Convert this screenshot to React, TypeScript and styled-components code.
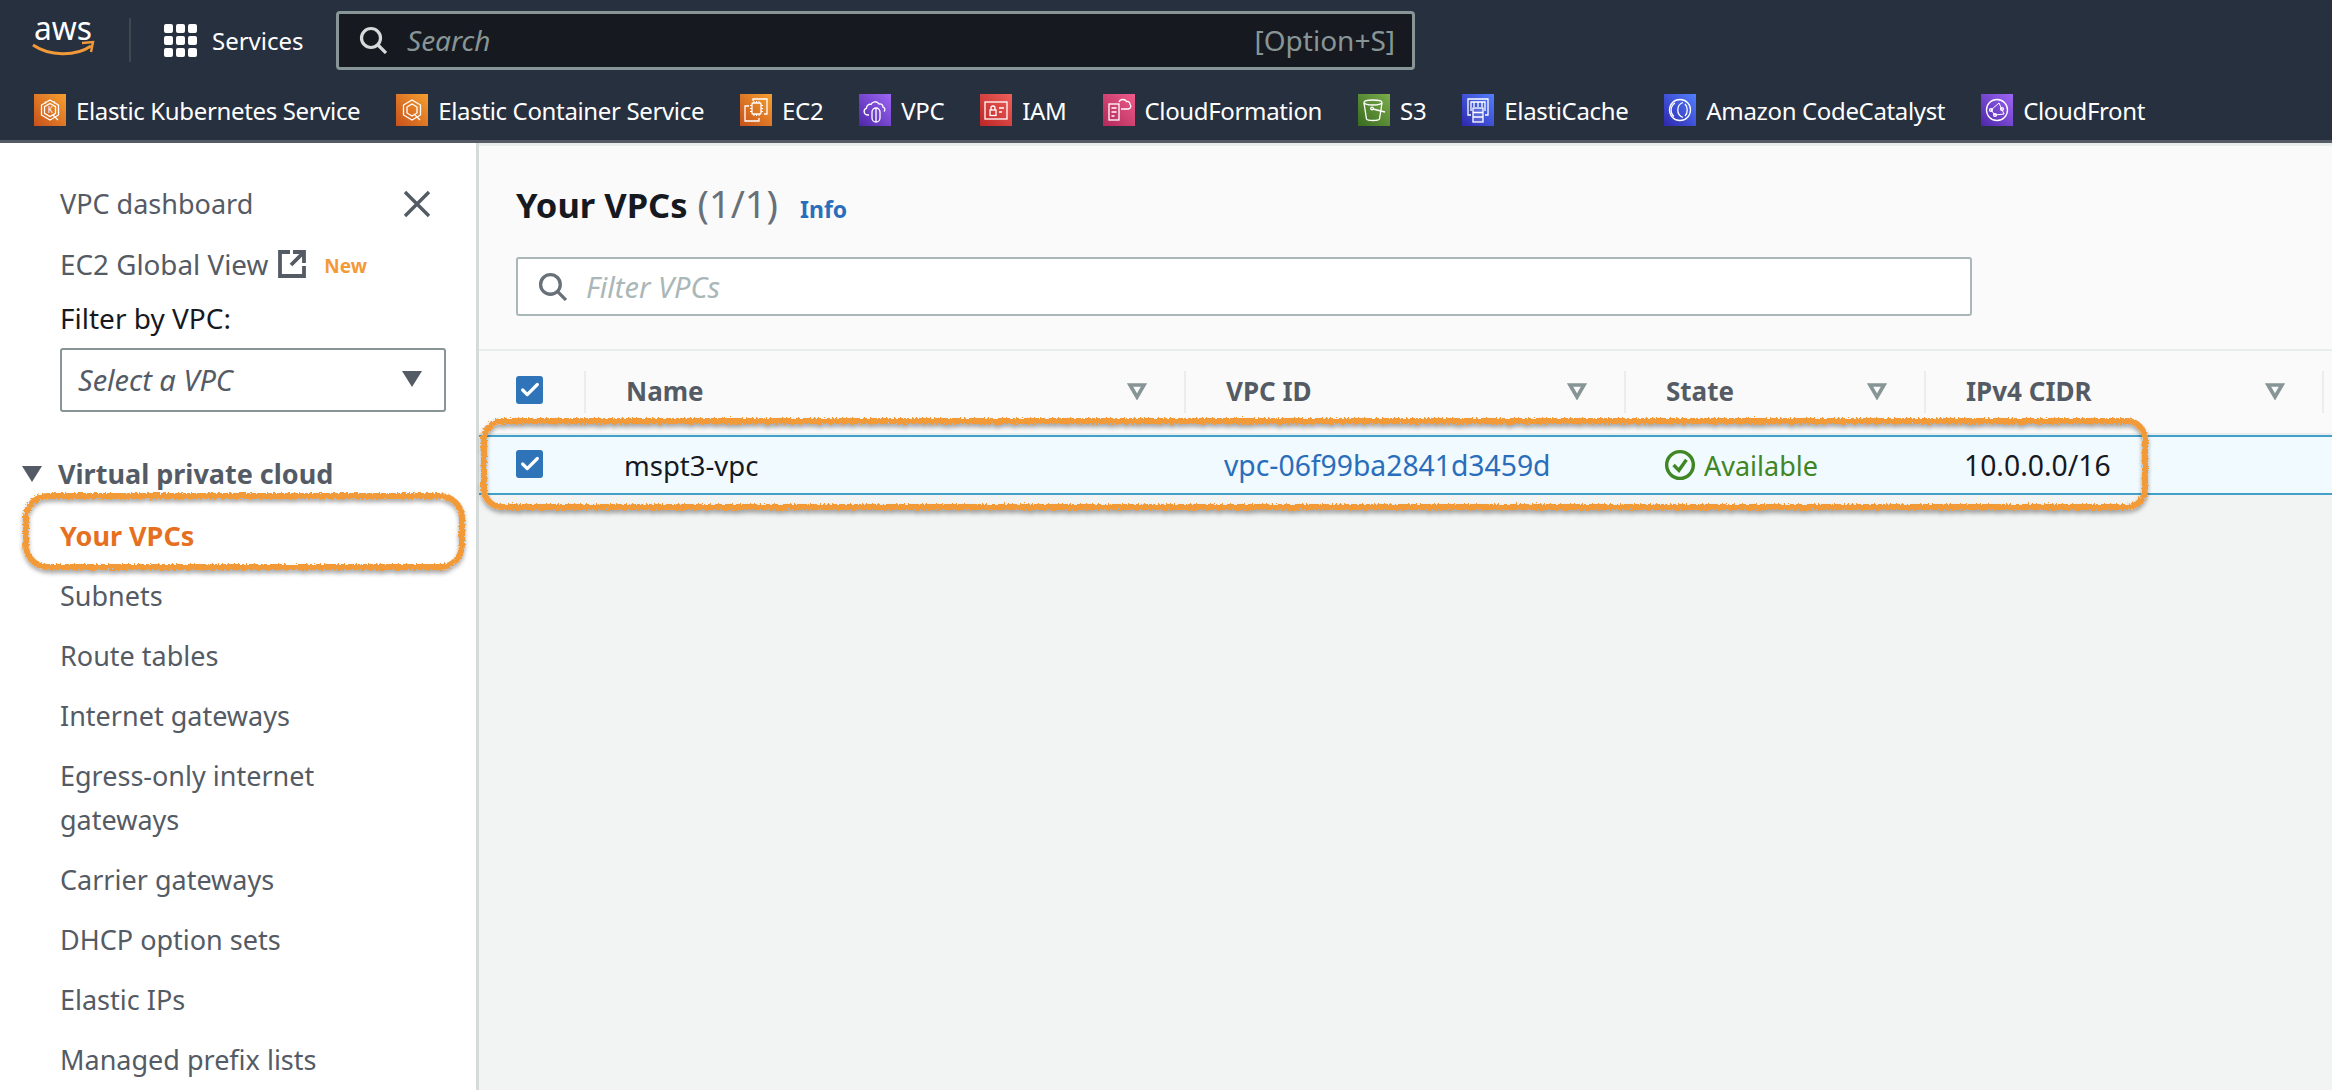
import React from 'react'
import styled, { createGlobalStyle } from 'styled-components'
import { Check } from 'lucide-react'

const GlobalStyle = createGlobalStyle`
  html, body {
    margin: 0;
    padding: 0;
    height: 1090px;
    overflow: hidden;
    background: #f2f3f3;
    font-family: "Noto Sans", "Open Sans", sans-serif;
  }
`

const Page = styled.div`
  position: relative;
  width: 2332px;
  height: 1090px;
  overflow: hidden;
`

const TopBar = styled.header`
  height: 140px;
  background: #27303f;
  border-bottom: 3px solid #545b64;
`
const BarRow = styled.div`
  display: flex;
  align-items: center;
  height: 80px;
  padding-left: 32px;
`
const BarDivider = styled.span`
  width: 2px;
  height: 44px;
  background: #414750;
  margin: 0 33px 0 33px;
`
const DotGrid = styled.div`
  display: grid;
  grid-template-columns: repeat(3, 9px);
  gap: 3px;
  margin-right: 15px;
`
const Dot = styled.span`
  width: 9px;
  height: 9px;
  border-radius: 2px;
  background: #fff;
`
const ServicesLabel = styled.span`
  color: #fff;
  font-size: 24px;
  width: 124px;
`
const SearchBox = styled.div`
  box-sizing: border-box;
  width: 1079px;
  height: 59px;
  display: flex;
  align-items: center;
  padding: 0 17px 0 20px;
  background: #16191f;
  border: 3px solid #879596;
  border-radius: 4px;
  color: #879596;
  font-size: 28px;
`
const SearchHint = styled.span`
  flex: 1;
  font-style: italic;
  margin-left: 20px;
`

const FavRow = styled.nav`
  display: flex;
  align-items: center;
  gap: 36px;
  height: 60px;
  padding: 0 0 0 34px;
`
const Fav = styled.a`
  display: flex;
  align-items: center;
  gap: 10px;
  color: #fff;
  font-size: 24px;
  letter-spacing: -0.35px;
  white-space: nowrap;
`
const Tile = styled.span<{ $from: string; $to: string }>`
  width: 32px;
  height: 32px;
  flex: none;
  background: linear-gradient(45deg, ${(p) => p.$from}, ${(p) => p.$to});
  svg {
    display: block;
    fill: none;
    stroke: #fff;
    stroke-width: 1.3;
  }
`

const Body = styled.div`
  display: flex;
  height: 947px;
`
const Sidebar = styled.aside`
  box-sizing: border-box;
  width: 479px;
  flex: none;
  padding: 31px 30px 0 60px;
  background: #fff;
  border-right: 3px solid #d5dbdb;
  overflow: hidden;
`
const NavItem = styled.div<{ $active?: boolean }>`
  padding: 8px 40px 8px 0;
  font-size: 27px;
  line-height: 44px;
  color: ${(p) => (p.$active ? '#e5701f' : '#545b64')};
  font-weight: ${(p) => (p.$active ? 700 : 400)};
`
const NavTop = styled(NavItem)`
  display: flex;
  align-items: center;
  justify-content: space-between;
  padding-right: 15px;
`
const GlobalView = styled(NavItem)`
  display: flex;
  align-items: center;
  font-size: 27.800px;
`
const ExternalIcon = styled.svg`
  margin-left: 10px;
  flex: none;
`
const NewTag = styled.span`
  color: #f39a38;
  font-size: 19px;
  line-height: 1;
  font-weight: 700;
  margin: 4px 0 0 18px;
`
const FilterLabel = styled.div`
  margin-top: 2px;
  font-size: 28px;
  line-height: 44px;
  color: #16191f;
`
const SelectBox = styled.div`
  box-sizing: border-box;
  height: 64px;
  margin-top: 8px;
  display: flex;
  align-items: center;
  justify-content: space-between;
  padding: 0 22px 2px 16px;
  border: 2px solid #879596;
  border-radius: 3px;
  font-size: 29px;
  font-style: italic;
  color: #545b64;
`
const Caret = styled.span`
  width: 0;
  height: 0;
  border-left: 10px solid transparent;
  border-right: 10px solid transparent;
  border-top: 16px solid #545b64;
`
const SectionHead = styled.div`
  display: flex;
  align-items: center;
  gap: 16px;
  margin: 40px 0 10px -38px;
  font-size: 27px;
  line-height: 44px;
  font-weight: 700;
  color: #545b64;
`

const Main = styled.main`
  flex: 1;
  min-width: 0;
  border-top: 3px solid #eaeded;
`
const TopPanel = styled.section`
  box-sizing: border-box;
  height: 205px;
  padding: 32px 37px 0;
  background: #fafafa;
  border-bottom: 2px solid #eaeded;
`
const TitleLine = styled.div`
  display: flex;
  align-items: baseline;
  height: 50px;
  line-height: 50px;
`
const Title = styled.h1`
  margin: 0;
  font-size: 34.500px;
  font-weight: 700;
  color: #16191f;
`
const Count = styled.span`
  margin-left: 10px;
  font-size: 38px;
  color: #687078;
`
const InfoLink = styled.a`
  margin-left: 22px;
  font-size: 23px;
  font-weight: 700;
  color: #2a6ebb;
`
const FilterBox = styled.div`
  box-sizing: border-box;
  width: 1456px;
  height: 59px;
  margin-top: 29px;
  display: flex;
  align-items: center;
  gap: 19px;
  padding: 0 20px;
  background: #fff;
  border: 2px solid #aab7b8;
  border-radius: 3px;
  font-size: 29px;
  font-style: italic;
  color: #aab7b8;
`

const columns = '105px 600px 440px 300px 400px 1fr'

const HeadRow = styled.div`
  display: grid;
  grid-template-columns: ${columns};
  align-items: center;
  height: 84px;
  background: #fafafa;
  border-bottom: 2px solid #eaeded;
  box-sizing: border-box;
`
const HeadCell = styled.div`
  box-sizing: border-box;
  height: 42px;
  display: flex;
  align-items: center;
  justify-content: space-between;
  padding: 0 37px 2px 40px;
  border-left: 2px solid #eaeded;
  font-size: 26px;
  font-weight: 700;
  color: #545b64;
  &:nth-child(5) {
    border-right: 2px solid #eaeded;
  }
`
const BodyRow = styled.div`
  display: grid;
  grid-template-columns: ${columns};
  align-items: center;
  box-sizing: border-box;
  height: 60px;
  background: #f1faff;
  border-top: 2px solid #44a0c9;
  border-bottom: 2px solid #44a0c9;
`
const BodyCell = styled.div<{ $color?: string; $size: number }>`
  display: flex;
  align-items: center;
  gap: 8px;
  padding-left: 40px;
  font-size: ${(p) => p.$size}px;
  color: ${(p) => p.$color || '#16191f'};
`
const CheckCell = styled.div<{ $lift: number }>`
  padding: 0 0 ${(p) => p.$lift}px 37px;
`
const CheckBox = styled.span`
  display: flex;
  align-items: center;
  justify-content: center;
  width: 27px;
  height: 28px;
  border-radius: 3px;
  background: #2f74b9;
  color: #fff;
`
const FilterArrow = styled.svg`
  display: block;
  width: 20px;
  height: 18px;
`

const Annotations = styled.svg`
  position: absolute;
  left: 0;
  top: 0;
  pointer-events: none;
`

const SearchIcon = ({ color, size }: { color: string; size: number }) => (
  <svg width={size} height={size} viewBox="0 0 28 28" fill="none" stroke={color} strokeWidth="3.2">
    <circle cx="12" cy="12" r="9.5" />
    <path d="M19 19l8 8" />
  </svg>
)

const AwsLogo = () => (
  <svg width="64" height="80" viewBox="0 -18 64 80">
    <text x="2" y="22" fontFamily="Noto Sans" fontSize="33" fill="#fff" textLength="58" lengthAdjust="spacingAndGlyphs">
      aws
    </text>
    <path d="M1 27c16 11 42 12 58 1" fill="none" stroke="#f39a38" strokeWidth="3" />
    <path d="M50 25l11-1-2 10" fill="none" stroke="#f39a38" strokeWidth="2.4" />
  </svg>
)

const EksIcon = () => (
  <svg viewBox="0 0 32 32" width="32" height="32">
    <path d="M16 6l8.5 5v10L16 26l-8.5-5V11z" />
    <path d="M16 9.5l5.5 3.2v6.6L16 22.5l-5.5-3.2v-6.6z" />
    <path d="M12 7.5l-1 2M20 7.500l1 2M19 21l5 5" />
    <text x="16" y="19" fontSize="8" textAnchor="middle" fill="#fff" stroke="none" fontFamily="Noto Sans">K</text>
  </svg>
)
const EcsIcon = () => (
  <svg viewBox="0 0 32 32" width="32" height="32">
    <path d="M16 6l8.500 5v10L16 26l-8.500-5V11z" />
    <path d="M16 10l5 3v6l-5 3-5-3v-6z" />
    <path d="M19 21l5 5" />
  </svg>
)
const Ec2Icon = () => (
  <svg viewBox="0 0 32 32" width="32" height="32">
    <rect x="12" y="9" width="9" height="11" rx="1" />
    <path d="M10 11.500h2M10 14.500h2M10 17.500h2M21 11.500h2M21 14.500h2M21 17.500h2M14 7v2M16.500 7v2M19 7v2M14 20v2M16.500 20v2M19 20v2" strokeWidth="1" />
    <path d="M13 7V5h14v15h-3M9 12H5v15h14v-3" />
  </svg>
)
const VpcIcon = () => (
  <svg viewBox="0 0 32 32" width="32" height="32">
    <path d="M10 21H8.500a3.500 3.500 0 0 1-1-6.800c0-3 2.500-4.500 4.500-3.700C13 7.500 18 6.500 20 10c2.500-.5 4 1 4 3.200 2 .5 2.500 2.800 1 4.300" />
    <rect x="13" y="14" width="8" height="14" rx="4" />
    <path d="M17 14v14" />
  </svg>
)
const IamIcon = () => (
  <svg viewBox="0 0 32 32" width="32" height="32">
    <rect x="5" y="8" width="22" height="17" />
    <rect x="10" y="16" width="6" height="5.500" />
    <path d="M11 16v-2a2 2 0 0 1 4 0v2M19 14h5M19 18h3" />
  </svg>
)
const CloudFormationIcon = () => (
  <svg viewBox="0 0 32 32" width="32" height="32">
    <rect x="6" y="10" width="10" height="16" />
    <path d="M8.500 14h5M8.500 18h5M8.500 22h3" />
    <path d="M16 8c1-3 6-3.500 7.500-.5 2-.5 3.500 1 3.500 3 1.500 1 1 4-1.500 4.500H18" />
  </svg>
)
const S3Icon = () => (
  <svg viewBox="0 0 32 32" width="32" height="32">
    <ellipse cx="15" cy="8.500" rx="9" ry="2.500" />
    <path d="M6 9l2.500 16c1 2 12 2 13 0L24 9" />
    <circle cx="14" cy="14.500" r="1.300" />
    <path d="M15 15l12 3" />
  </svg>
)
const ElastiCacheIcon = () => (
  <svg viewBox="0 0 32 32" width="32" height="32">
    <path d="M9 21H6V5h20v16h-3M9 17V8h14v9M12 8v5M16 8v5M20 8v5" />
    <rect x="11" y="14" width="10" height="14" fill="#fff" fillOpacity=".15" />
    <path d="M11 18.500h10M11 23h10" />
  </svg>
)
const CatalystIcon = () => (
  <svg viewBox="0 0 32 32" width="32" height="32">
    <circle cx="16" cy="16" r="10.500" />
    <path d="M19 8.500a8 8 0 0 0 0 15M11 9a8.500 8.500 0 0 0-1 13.500M21 10c3 3 3 9 0 12" />
  </svg>
)
const CloudFrontIcon = () => (
  <svg viewBox="0 0 32 32" width="32" height="32">
    <circle cx="16" cy="16" r="10.500" />
    <path d="M10 16l8-7 5 11M10 16l4 5 9-1" strokeWidth="1" />
    <circle cx="10" cy="16" r="1.400" />
    <circle cx="14" cy="21" r="1.400" />
    <circle cx="21" cy="15" r="1.400" />
  </svg>
)

const ORANGE = ['#c8511b', '#f59f30']
const PURPLE = ['#4d27a8', '#9e66f5']
const BLUE = ['#2e27ad', '#527fff']

const favourites = [
  { label: 'Elastic Kubernetes Service', colors: ORANGE, Icon: EksIcon },
  { label: 'Elastic Container Service', colors: ORANGE, Icon: EcsIcon },
  { label: 'EC2', colors: ORANGE, Icon: Ec2Icon },
  { label: 'VPC', colors: PURPLE, Icon: VpcIcon },
  { label: 'IAM', colors: ['#bd2626', '#ee5f5a'], Icon: IamIcon },
  { label: 'CloudFormation', colors: ['#b0295a', '#ef5c8b'], Icon: CloudFormationIcon },
  { label: 'S3', colors: ['#3a6b20', '#7aad4b'], Icon: S3Icon },
  { label: 'ElastiCache', colors: BLUE, Icon: ElastiCacheIcon },
  { label: 'Amazon CodeCatalyst', colors: BLUE, Icon: CatalystIcon },
  { label: 'CloudFront', colors: PURPLE, Icon: CloudFrontIcon },
]

const navLinks = [
  'Subnets',
  'Route tables',
  'Internet gateways',
  'Egress-only internet gateways',
  'Carrier gateways',
  'DHCP option sets',
  'Elastic IPs',
  'Managed prefix lists',
]

const headers = ['Name', 'VPC ID', 'State', 'IPv4 CIDR']

const TickBox = () => (
  <CheckBox>
    <Check size={22} strokeWidth={3.5} />
  </CheckBox>
)

const App = () => (
  <Page>
    <GlobalStyle />
    <TopBar>
      <BarRow>
        <AwsLogo />
        <BarDivider />
        <DotGrid>
          {Array.from({ length: 9 }, (_, i) => (
            <Dot key={i} />
          ))}
        </DotGrid>
        <ServicesLabel>Services</ServicesLabel>
        <SearchBox>
          <SearchIcon color="#d5dbdb" size={28} />
          <SearchHint>Search</SearchHint>
          <span>[Option+S]</span>
        </SearchBox>
      </BarRow>
      <FavRow>
        {favourites.map(({ label, colors, Icon }) => (
          <Fav key={label}>
            <Tile $from={colors[0]} $to={colors[1]}>
              <Icon />
            </Tile>
            {label}
          </Fav>
        ))}
      </FavRow>
    </TopBar>
    <Body>
      <Sidebar>
        <NavTop>
          VPC dashboard
          <svg width="28" height="28" viewBox="0 0 28 28" stroke="#545b64" strokeWidth="3.400">
            <path d="M2 2l24 24M26 2L2 26" />
          </svg>
        </NavTop>
        <GlobalView>
          EC2 Global View
          <ExternalIcon width="28" height="28" viewBox="0 0 28 28" fill="none" stroke="#545b64" strokeWidth="3.800">
            <path d="M12 2H2v24h24V16M15 2h11v11M26 2L13 15" />
          </ExternalIcon>
          <NewTag>New</NewTag>
        </GlobalView>
        <FilterLabel>Filter by VPC:</FilterLabel>
        <SelectBox>
          Select a VPC
          <Caret />
        </SelectBox>
        <SectionHead>
          <Caret />
          Virtual private cloud
        </SectionHead>
        <NavItem $active>Your VPCs</NavItem>
        {navLinks.map((link) => (
          <NavItem key={link}>{link}</NavItem>
        ))}
      </Sidebar>
      <Main>
        <TopPanel>
          <TitleLine>
            <Title>Your VPCs</Title>
            <Count>(1/1)</Count>
            <InfoLink>Info</InfoLink>
          </TitleLine>
          <FilterBox>
            <SearchIcon color="#687078" size={29} />
            Filter VPCs
          </FilterBox>
        </TopPanel>
        <HeadRow>
          <CheckCell $lift={5}>
            <TickBox />
          </CheckCell>
          {headers.map((h) => (
            <HeadCell key={h}>
              {h}
              <FilterArrow viewBox="0 0 20 18" fill="none" stroke="#879596" strokeWidth="3.600">
                <path d="M3 3h14L10 15z" />
              </FilterArrow>
            </HeadCell>
          ))}
          <div />
        </HeadRow>
        <BodyRow>
          <CheckCell $lift={2}>
            <TickBox />
          </CheckCell>
          <BodyCell $size={27.5}>mspt3-vpc</BodyCell>
          <BodyCell $size={28.3} $color="#2a6ebb">
            vpc-06f99ba2841d3459d
          </BodyCell>
          <BodyCell $size={27} $color="#3f8624">
            <svg width="32" height="32" viewBox="0 0 30 30" fill="none" stroke="#3f8624" strokeWidth="3.200">
              <circle cx="15" cy="15" r="12.500" />
              <path d="M9 15l5 5 7-10" />
            </svg>
            Available
          </BodyCell>
          <BodyCell $size={28.3}>10.0.0.0/16</BodyCell>
          <div />
        </BodyRow>
      </Main>
    </Body>
    <Annotations width="2332" height="1090" viewBox="0 0 2332 1090" fill="none">
      <defs>
        <filter id="rough" x="-5%" y="-20%" width="110%" height="140%">
          <feTurbulence type="fractalNoise" baseFrequency="0.5" numOctaves="2" seed="3" />
          <feDisplacementMap in="SourceGraphic" scale="5" />
          <feDropShadow dx="0" dy="3" stdDeviation="2" floodColor="#000" floodOpacity="0.35" />
        </filter>
      </defs>
      <g stroke="#f39a38" strokeWidth="6" filter="url(#rough)">
        <rect x="26" y="496" width="436" height="71" rx="22" />
        <rect x="484" y="421" width="1661" height="86" rx="18" />
      </g>
    </Annotations>
  </Page>
)

export default App
